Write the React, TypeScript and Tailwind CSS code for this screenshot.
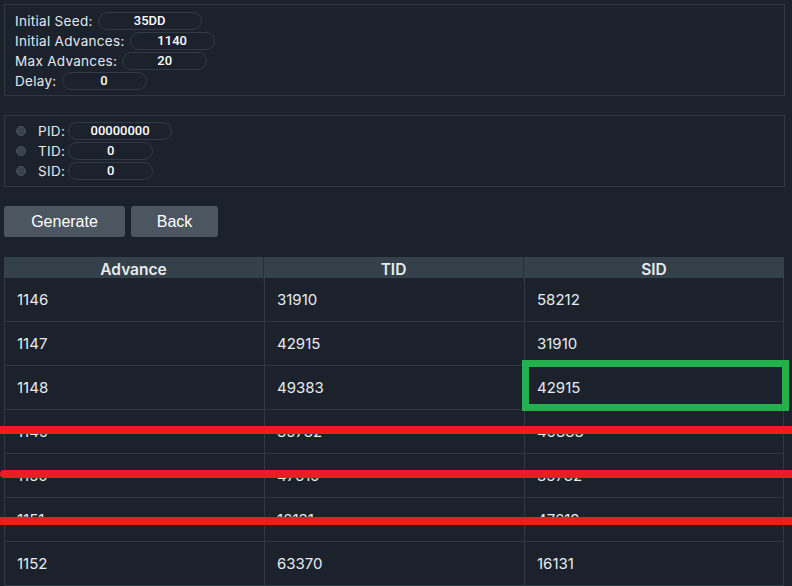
const rows = [
  ["1146", "31910", "58212"],
  ["1147", "42915", "31910"],
  ["1148", "49383", "42915"],
  ["1149", "35782", "49383"],
  ["1150", "47619", "35782"],
  ["1151", "16131", "47619"],
  ["1152", "63370", "16131"],
]

const label = "text-[13.5px] tracking-[0.3px] text-[#e4e8ec] font-['Inter',sans-serif] leading-none pt-[1px]"

function Field({ value, w }: { value: string; w: string }) {
  return (
    <div
      className={`${w} h-[18px] rounded-full border border-[#303b45] flex items-center justify-center text-[13px] font-medium text-white font-['Roboto',sans-serif]`}
    >
      {value}
    </div>
  )
}

function Radio() {
  return <div className="w-[10px] h-[10px] rounded-full bg-[#3a434d] border border-[#4a535c]" />
}

export default function App() {
  return (
    <div className="relative w-[792px] h-[586px] overflow-hidden bg-[#1b222c] px-[4px] pt-[4px]">
      <div className="w-[781px] h-[92px] border border-[#2e3842] pt-[6px] pl-[10px] flex flex-col">
        <div className="h-[20px] flex items-center gap-[5px]">
          <span className={label}>Initial Seed:</span>
          <Field value="35DD" w="w-[104px]" />
        </div>
        <div className="h-[20px] flex items-center gap-[5px]">
          <span className={label}>Initial Advances:</span>
          <Field value="1140" w="w-[85px]" />
        </div>
        <div className="h-[20px] flex items-center gap-[5px]">
          <span className={label}>Max Advances:</span>
          <Field value="20" w="w-[85px]" />
        </div>
        <div className="h-[20px] flex items-center gap-[5px]">
          <span className={label}>Delay:</span>
          <Field value="0" w="w-[85px]" />
        </div>
      </div>

      <div className="mt-[19px] w-[781px] h-[72px] border border-[#2e3842] pt-[5px] pl-[11px] flex flex-col">
        {[
          ["PID:", "00000000", "w-[104px]"],
          ["TID:", "0", "w-[85px]"],
          ["SID:", "0", "w-[85px]"],
        ].map(([l, v, w]) => (
          <div key={l} className="h-[20px] flex items-center">
            <Radio />
            <span className={`${label} ml-[12px] mr-[3px]`}>{l}</span>
            <Field value={v} w={w} />
          </div>
        ))}
      </div>

      <div className="mt-[19px] flex gap-[6px]">
        <button className="w-[121px] h-[31px] rounded-[3px] bg-[#4b5661] text-white text-[16px] font-['Liberation_Sans',sans-serif]">
          Generate
        </button>
        <button className="w-[87px] h-[31px] rounded-[3px] bg-[#4b5661] text-white text-[16px] font-['Liberation_Sans',sans-serif]">
          Back
        </button>
      </div>

      <div className="mt-[20px] w-[780px] font-['Inter',sans-serif] text-[#e8ebee]">
        <div className="grid grid-cols-3 h-[21px] bg-[#34414b] text-[15.5px] font-semibold">
          {["Advance", "TID", "SID"].map((h, i) => (
            <div
              key={h}
              className={`flex items-center justify-center pt-[1px] ${i < 2 ? "border-r border-[#26303a]" : ""}`}
            >
              {h}
            </div>
          ))}
        </div>
        {rows.map((r) => (
          <div key={r[0]} className="grid grid-cols-3 h-[44px] border-b border-[#2e3842]">
            {r.map((c, i) => (
              <div
                key={i}
                className={`flex items-center pl-[12px] pt-[1px] text-[15px] border-l border-[#2e3842] ${i === 2 ? "border-r" : ""}`}
              >
                {c}
              </div>
            ))}
          </div>
        ))}
      </div>

      {/* annotations on top of the screenshot */}
      <div className="absolute left-[522px] top-[360px] w-[267px] h-[51px] border-[7px] border-[#22b14c]" />
      <div className="absolute left-0 top-[426px] w-[792px] h-[8px] bg-[#ed1c24]" />
      <div className="absolute left-0 top-[470px] w-[792px] h-[8px] bg-[#ed1c24] rounded-l-full" />
      <div className="absolute left-0 top-[517px] w-[792px] h-[8px] bg-[#ed1c24]" />
    </div>
  )
}
